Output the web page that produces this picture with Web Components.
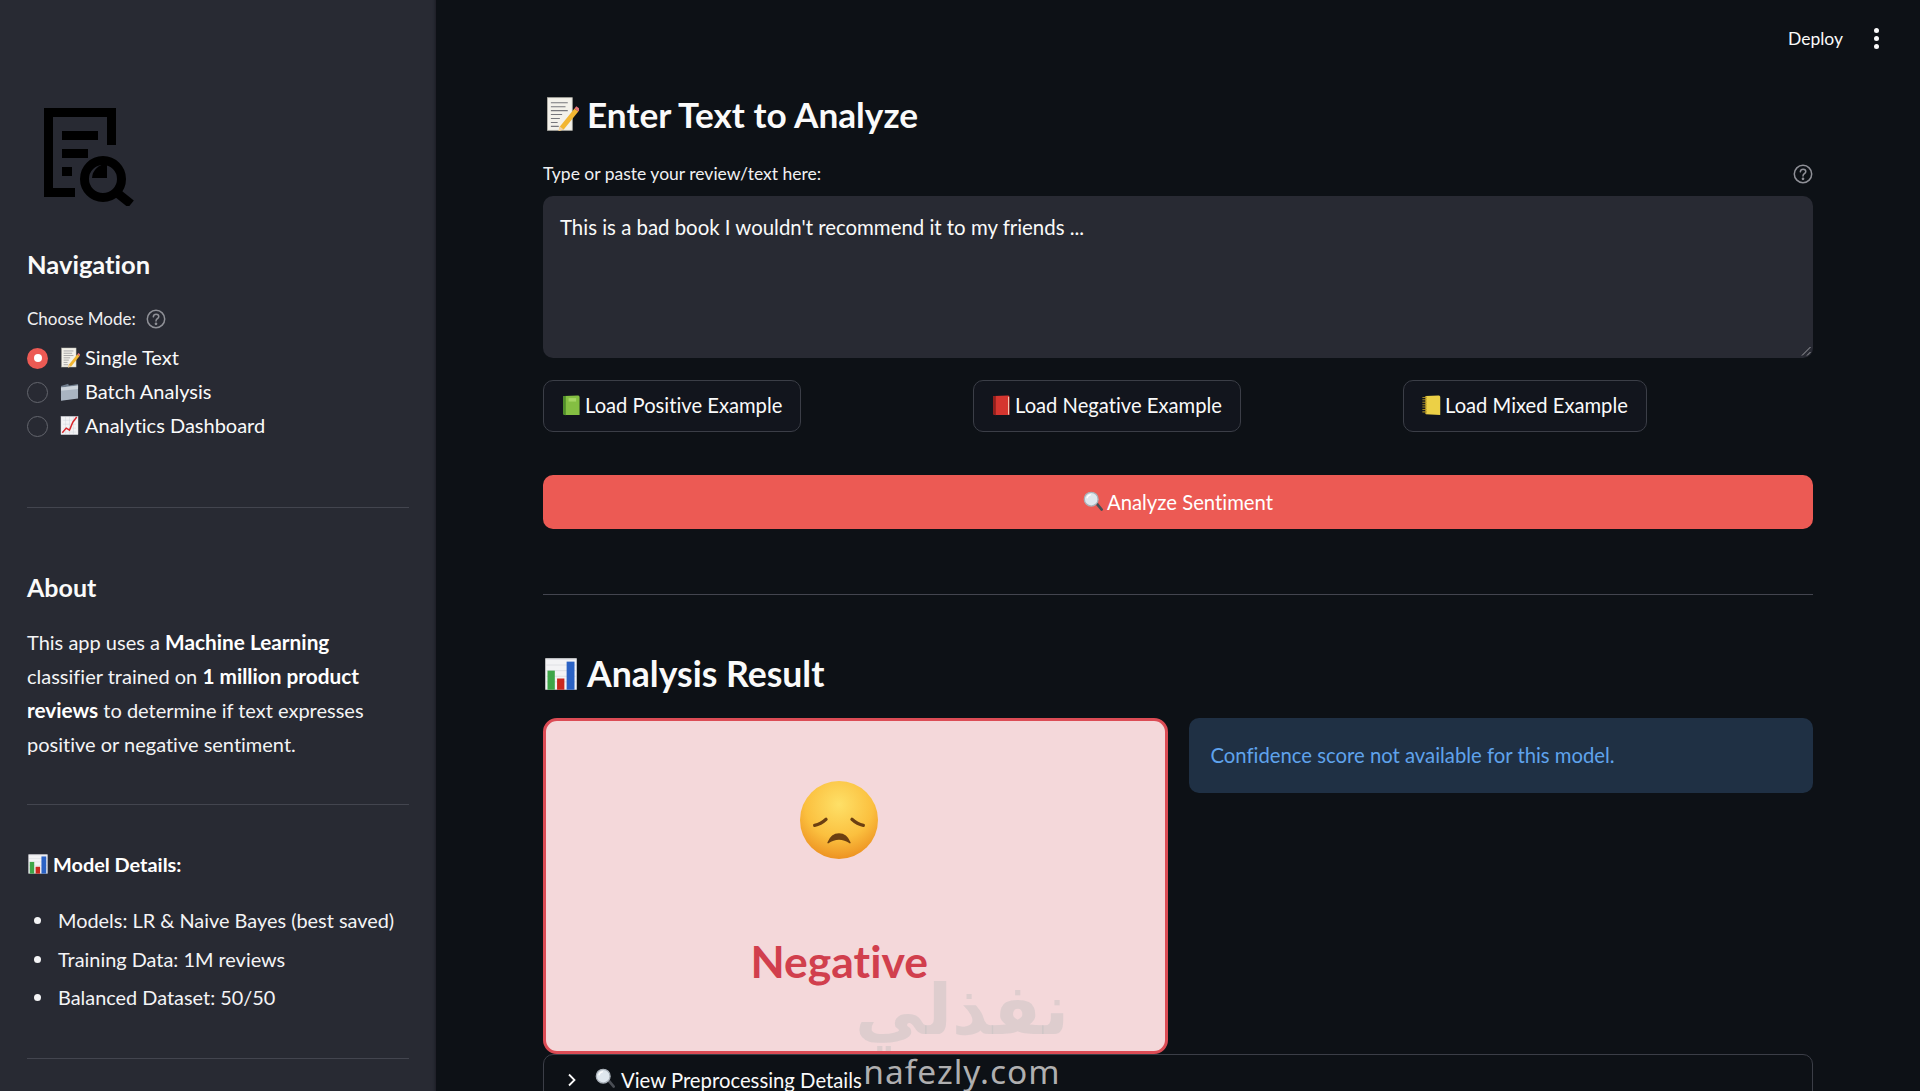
<!doctype html>
<html lang="en">
  <head>
    <meta charset="utf-8">
    <title>Sentiment Analysis</title>
    <style>
      html, body { margin: 0; height: 100%; overflow: hidden; background: #0d1116; }
    </style>
  </head>
  <body>
    <st-app>
      <st-sidebar slot="sidebar">
        <st-logo></st-logo>
        <st-heading class="nav">Navigation</st-heading>
        <st-label class="mode">Choose Mode: <st-help></st-help></st-label>
        <st-radio checked icon="memo">Single Text</st-radio>
        <st-radio icon="folder">Batch Analysis</st-radio>
        <st-radio icon="trend">Analytics Dashboard</st-radio>
        <st-divider class="d1"></st-divider>
        <st-heading class="about">About</st-heading>
        <st-about></st-about>
        <st-divider class="d2"></st-divider>
        <st-model-details></st-model-details>
        <st-divider class="d3"></st-divider>
      </st-sidebar>
      <st-header slot="header"></st-header>
      <st-title icon="memo" class="t1">Enter Text to Analyze</st-title>
      <st-textarea label="Type or paste your review/text here:">This is a bad book I wouldn't recommend it to my friends ...</st-textarea>
      <st-button-row>
        <st-button icon="greenbook">Load Positive Example</st-button>
        <st-button icon="redbook">Load Negative Example</st-button>
        <st-button icon="ledger">Load Mixed Example</st-button>
      </st-button-row>
      <st-primary icon="search">Analyze Sentiment</st-primary>
      <st-divider class="d4"></st-divider>
      <st-title icon="bars" class="t2">Analysis Result</st-title>
      <st-result>
        <st-card label="Negative"></st-card>
        <st-info>Confidence score not available for this model.</st-info>
      </st-result>
      <st-expander icon="search">View Preprocessing Details</st-expander>
      <st-watermark slot="overlay"></st-watermark>
    </st-app>

    <style>
      st-heading.nav { margin-top: 43px; font-size: 25.500px; }
      st-heading.about { margin-top: 64px; }
      st-label.mode { margin-top: 28px; margin-bottom: 10px; }
      st-divider.d1 { margin-top: 64px; }
      st-divider.d2 { margin-top: 43px; }
      st-divider.d3 { margin-top: 41px; }
      st-divider.d4 { margin-top: 65px; }
      st-title.t1 { margin-top: 14.500px; font-size: 35.200px; }
      st-title.t2 { margin-top: 56px; margin-bottom: 1px; }
    </style>

    <script>
    const FONT = `"Lato", "Noto Sans", sans-serif`;

    const EMOJI = {
      memo: `<rect x="4" y="1.500" width="22" height="29" fill="#f3f1ea" stroke="#b9b7ae" stroke-width=".7"/>
        <path d="M7 6h15M7 9.500h13M7 13h15M7 16.500h10M7 20h8M7 23.500h6M7 27h7" stroke="#77777c" stroke-width=".9"/>
        <path d="M15 27l13-16 3.400 2.800-13 16-4.600 1.400z" fill="#f2b632"/>
        <path d="M28 11l1.600-2 3.400 2.800-1.600 2z" fill="#e8757a"/>
        <path d="M13.800 31.200l1.200-4.200 3.400 2.800z" fill="#f0d2a8"/>`,
      folder: `<path d="M3 7.500l11-3.500 1 3 14-2.500v21l-25 4z" fill="#6f7c8c"/>
        <path d="M3 10l26-3v19.500l-26 3.500z" fill="#a9b4c1"/>
        <path d="M3 10l26-3v5l-26 3z" fill="#ccd3db"/>`,
      trend: `<rect x="3" y="2" width="26" height="28" fill="#f4f4f6" stroke="#c8c8ce" stroke-width=".6"/>
        <path d="M6 8h20M6 14h20M6 20h20M6 26h20M10 3v26M16 3v26M22 3v26" stroke="#cfd4dc" stroke-width=".7"/>
        <path d="M5 27l6-7 5 3 5-12 6-8" fill="none" stroke="#d8262c" stroke-width="2.200"/>`,
      bars: `<rect x="2" y="2" width="28" height="28" fill="#f3f3f5"/>
        <path d="M3 3h26M3 8h26M3 13h26M3 18h26M3 23h26" stroke="#d5d7dc" stroke-width=".6"/>
        <rect x="4" y="13" width="6.500" height="17" fill="#3fa649"/>
        <rect x="12.500" y="20" width="6.500" height="10" fill="#c9281f"/>
        <rect x="21" y="5" width="7" height="25" fill="#2b62c4"/>`,
      greenbook: `<path d="M5 3l19-1c2 0 3 1 3 2.500v26l-21 0c-2 0-3-1-3-3v-22c0-1.500.300-2.500 2-2.500z" fill="#84bf42"/>
        <path d="M3 5c0-1.500.500-2 2-2.200l2 0v28c-2.500 0-4-1-4-3z" fill="#4f8d2a"/>
        <rect x="11" y="6" width="11" height="5" fill="#a5d663"/>`,
      redbook: `<path d="M5 3l19-1c2 0 3 1 3 2.500v26l-21 0c-2 0-3-1-3-3v-22c0-1.500.300-2.500 2-2.500z" fill="#d5352f"/>
        <path d="M3 5c0-1.500.500-2 2-2.200l2 0v28c-2.500 0-4-1-4-3z" fill="#8f1f1d"/>
        <path d="M25.500 4v26" stroke="#f0c7b4" stroke-width="1.600"/>`,
      ledger: `<path d="M7 3l18-1c2 0 3 1 3 2.500v26l-21-1z" fill="#ecd046"/>
        <path d="M2 5h6M2 8.500h6M2 12h6M2 15.500h6M2 19h6M2 22.500h6M2 26h6" stroke="#a08624" stroke-width="1.500"/>
        <path d="M7 3v26" stroke="#b89a28" stroke-width="1.500"/>`,
      search: `<path d="M18 19l3-3 9 11c.800 1 .700 2-.200 2.800-.900.800-2 .700-2.800-.200z" fill="#4a4e55"/>
        <circle cx="12.500" cy="12.500" r="10.500" fill="#dfe7ee" stroke="#a9b1b9" stroke-width="2"/>
        <path d="M6 11c.800-3 3-5 6-5.500" stroke="#fff" stroke-width="2" fill="none"/>`,
      sad: `<defs><radialGradient id="sadface" cx="50%" cy="30%" r="72%">
          <stop offset="0" stop-color="#fee067"/><stop offset=".6" stop-color="#fbc03f"/><stop offset="1" stop-color="#ec8f1f"/></radialGradient></defs>
        <circle cx="16" cy="16" r="16" fill="url(#sadface)"/>
        <path d="M6 18.200c1.600-.300 3.200-1.100 4.700-2.500" fill="none" stroke="#6b3f12" stroke-width="1.300" stroke-linecap="round"/>
        <path d="M26 18.200c-1.600-.300-3.200-1.100-4.700-2.500" fill="none" stroke="#6b3f12" stroke-width="1.300" stroke-linecap="round"/>
        <path d="M11.500 25.300c1-2.500 2.600-3.600 4.500-3.600s3.500 1.100 4.500 3.600c-1.400-1-2.900-1.500-4.500-1.500s-3.100.5-4.500 1.500z" fill="#6b3f12" stroke="#6b3f12" stroke-width=".6" stroke-linejoin="round"/>`
    };

    // small helper, every element only differs in its template
    function define(name, css, html) {
      customElements.define(name, class extends HTMLElement {
        constructor() {
          super();
          const shadowRootEl = this.attachShadow({mode: 'open'});
          const body = typeof html === 'function' ? html(this) : html;
          shadowRootEl.innerHTML = `<style>${css}</style>${body}`;
        }
      });
    }

    define('st-emoji', `
      :host { display: inline-block; width: var(--size, 24px); height: var(--size, 24px); flex: none; }
      svg { display: block; width: 100%; height: 100%; }
    `, (el) => `<svg viewBox="0 0 32 32">${EMOJI[el.getAttribute('name')] || ''}</svg>`);

    define('st-app', `
      :host {
        display: flex; position: relative; height: 1091px; overflow: hidden;
        font-family: ${FONT}; font-variant-ligatures: none; color: #fafafa; background: #0d1116;
      }
      main { flex: 1; min-width: 0; padding: 0 107px; box-sizing: border-box; }
    `, `<slot name="sidebar"></slot><main><slot name="header"></slot><slot></slot></main><slot name="overlay"></slot>`);

    define('st-sidebar', `
      :host {
        display: block; width: 436px; flex: none; box-sizing: border-box;
        padding: 108px 27px 0; background: #282a33; height: 1091px;
        box-shadow: inset -4px 0 3px -3px #1c1d24;
      }
    `, `<slot></slot>`);

    define('st-logo', `
      :host { display: block; margin-left: 17px; width: 90px; height: 98px; }
      svg { display: block; }
    `, `<svg width="90" height="98" viewBox="0 0 90 98" fill="none" stroke="#000">
      <path d="M31 84.500H4.500V4.500H67.500V37" stroke-width="9"/>
      <path d="M18 27.500h36M18 45.500h26M18 63.500h10" stroke-width="9"/>
      <circle cx="59" cy="71" r="18.500" stroke-width="9"/>
      <path d="M72 84l15 12" stroke-width="9"/>
      <path d="M63 70V56A15 15 0 0 0 48 70z" fill="#000" stroke="none"/>
    </svg>`);

    define('st-heading', `
      :host { display: block; font-size: 25px; font-weight: 700; line-height: 30px; }
    `, `<slot></slot>`);

    define('st-label', `
      :host { display: flex; align-items: center; gap: 10px; font-size: 17px; line-height: 24px; color: #f0f0f2; }
    `, `<slot></slot>`);

    define('st-help', `
      :host { display: inline-flex; width: 20px; height: 20px; }
      svg { display: block; }
    `, `<svg width="20" height="20" viewBox="0 0 20 20" fill="none" stroke="#8f9097" stroke-width="1.500">
      <circle cx="10" cy="10" r="8.700"/>
      <path d="M7.300 7.800c.2-1.600 1.400-2.600 2.800-2.600 1.500 0 2.700 1 2.700 2.400 0 2.100-2.800 2.100-2.800 4.300" stroke-linecap="round"/>
      <circle cx="10" cy="14.800" r=".6" fill="#8f9097"/>
    </svg>`);

    define('st-radio', `
      :host { display: flex; align-items: center; height: 34px; font-size: 20px; }
      .dot { width: 21px; height: 21px; box-sizing: border-box; border-radius: 50%; border: 1.500px solid #63656d; flex: none; margin-right: 11px; }
      .dot.on { background: #ec5a54; border: 0; display: flex; align-items: center; justify-content: center; }
      .dot.on::after { content: ""; width: 8px; height: 8px; background: #fff; border-radius: 50%; }
      st-emoji { --size: 21px; margin-right: 5px; position: relative; top: -1px; }
      span.t { padding-bottom: 2px; }
    `, (el) => `<span class="dot ${el.hasAttribute('checked') ? 'on' : ''}"></span><st-emoji name="${el.getAttribute('icon')}"></st-emoji><span class="t"><slot></slot></span>`);

    define('st-divider', `
      :host { display: block; height: 1px; background: #43454f; }
    `, ``);

    define('st-about', `
      :host { display: block; margin-top: 23px; font-size: 20px; line-height: 34px; color: #f4f4f6; white-space: nowrap; }
      b { font-weight: 700; font-size: 20.800px; color: #fff; }
      div { height: 34px; }
    `, `<div>This app uses a <b>Machine Learning</b></div>
      <div>classifier trained on <b>1 million product</b></div>
      <div><b>reviews</b> to determine if text expresses</div>
      <div>positive or negative sentiment.</div>`);

    define('st-model-details', `
      :host { display: block; margin-top: 44px; font-size: 19.900px; color: #f4f4f6; }
      .head { display: flex; align-items: center; height: 30px; font-weight: 700; color: #fff; gap: 4px; }
      st-emoji { --size: 22px; }
      ul { list-style: none; margin: 22px 0 0; padding: 0; }
      li { position: relative; height: 38.500px; line-height: 38.500px; padding-left: 31px; white-space: nowrap; }
      li::before { content: ""; position: absolute; left: 7px; top: 16px; width: 7px; height: 7px; border-radius: 50%; background: #f4f4f6; }
    `, `<div class="head"><st-emoji name="bars"></st-emoji><span>Model Details:</span></div>
      <ul><li>Models: LR &amp; Naive Bayes (best saved)</li><li>Training Data: 1M reviews</li><li>Balanced Dataset: 50/50</li></ul>`);

    define('st-header', `
      :host { display: flex; align-items: center; justify-content: flex-end; height: 76px; margin-right: -107px; font-size: 17.500px; }
      .deploy { margin-right: 31px; }
      .dots { margin-right: 41px; display: flex; flex-direction: column; gap: 3px; }
      .dots i { width: 5px; height: 5px; border-radius: 50%; background: #fafafa; display: block; }
    `, `<span class="deploy">Deploy</span><span class="dots"><i></i><i></i><i></i></span>`);

    define('st-title', `
      :host { display: flex; align-items: center; gap: 8px; height: 46px; font-size: 35.600px; font-weight: 700; line-height: 46px; }
      st-emoji { --size: 36px; }
    `, (el) => `<st-emoji name="${el.getAttribute('icon')}"></st-emoji><slot></slot>`);

    define('st-textarea', `
      :host { display: block; margin-top: 25.500px; }
      .label { display: flex; align-items: center; justify-content: space-between; height: 24px; font-size: 17.500px; color: #f0f0f2; }
      .label span { padding-bottom: 1px; }
      .box { position: relative; margin-top: 10px; height: 162px; box-sizing: border-box; padding: 17px 17px 0; background: #282a33; border-radius: 10px; font-size: 20.400px; line-height: 28px; }
      .grip { position: absolute; right: 2px; bottom: 2px; }
    `, (el) => `<div class="label"><span>${el.getAttribute('label')}</span><st-help></st-help></div>
      <div class="box"><slot></slot><svg class="grip" width="10" height="10" viewBox="0 0 10 10" stroke="#9a9ba1" stroke-width="1"><path d="M1 9.500L9.500 1M6 9.500L9.500 6"/></svg></div>`);

    define('st-button-row', `
      :host { display: grid; grid-template-columns: repeat(3, 1fr); gap: 20px; margin-top: 22px; justify-items: start; }
    `, `<slot></slot>`);

    define('st-button', `
      :host { display: inline-flex; align-items: center; height: 52px; box-sizing: border-box; padding: 0 18px 0 17px; gap: 2px; border: 1px solid #3b3e47; border-radius: 10px; background: #12151d; font-size: 20.200px; white-space: nowrap; }
      st-emoji { --size: 22px; position: relative; top: -1px; }
      span { padding-bottom: 2px; }
    `, (el) => `<st-emoji name="${el.getAttribute('icon')}"></st-emoji><span><slot></slot></span>`);

    define('st-primary', `
      :host { display: flex; align-items: center; justify-content: center; gap: 3px; height: 54px; margin-top: 43px; background: #ec5a54; border-radius: 10px; font-size: 20.300px; color: #fff; }
      st-emoji { --size: 21px; position: relative; top: -1px; }
      span { padding-bottom: 1px; }
    `, (el) => `<st-emoji name="${el.getAttribute('icon')}"></st-emoji><span><slot></slot></span>`);

    define('st-result', `
      :host { display: grid; grid-template-columns: 1fr 1fr; gap: 21px; margin-top: 21px; align-items: start; }
    `, `<slot></slot>`);

    define('st-card', `
      :host { display: flex; flex-direction: column; align-items: center; height: 336px; box-sizing: border-box; padding: 60px 32px 0 0; background: #f4d8da; border: 3px solid #dc4c55; border-radius: 14px; color: #d13f4d; }
      st-emoji { --size: 78px; }
      .label { margin-top: 74px; font-size: 44.500px; font-weight: 700; line-height: 56px; }
    `, (el) => `<st-emoji name="sad"></st-emoji><div class="label">${el.getAttribute('label')}</div>`);

    define('st-info', `
      :host { display: flex; align-items: center; height: 75px; box-sizing: border-box; padding: 0 22px 1px; background: #1f3044; border-radius: 10px; color: #5fa3ec; font-size: 20.300px; }
    `, `<slot></slot>`);

    define('st-expander', `
      :host { display: flex; align-items: flex-start; height: 60px; margin-top: 0; box-sizing: border-box; padding: 13px 0 0 22px; border: 1px solid #3b3e47; border-radius: 10px; font-size: 20.300px; line-height: 24px; }
      svg { display: block; margin: 5px 17px 0 0; }
      st-emoji { --size: 21px; margin-right: 5px; }
    `, (el) => `<svg width="12" height="14" viewBox="0 0 12 14" fill="none" stroke="#fafafa" stroke-width="1.800"><path d="M3 1.500L8.500 7 3 12.500"/></svg><st-emoji name="${el.getAttribute('icon')}"></st-emoji><slot></slot>`);

    define('st-watermark', `
      :host { position: absolute; left: 842px; top: 976px; width: 240px; text-align: center; pointer-events: none; }
      .ar { font-family: "DejaVu Sans", sans-serif; font-size: 70px; line-height: 68px; margin-bottom: 9px; font-weight: 700; color: rgba(190, 190, 190, .42); }
      .en { font-family: "Noto Sans", sans-serif; font-size: 33.500px; line-height: 36px; color: rgba(205, 205, 205, .85); letter-spacing: 1px; }
    `, `<div class="ar" lang="ar" dir="rtl">نفذلي</div><div class="en">nafezly.com</div>`);
    </script>
  </body>
</html>
